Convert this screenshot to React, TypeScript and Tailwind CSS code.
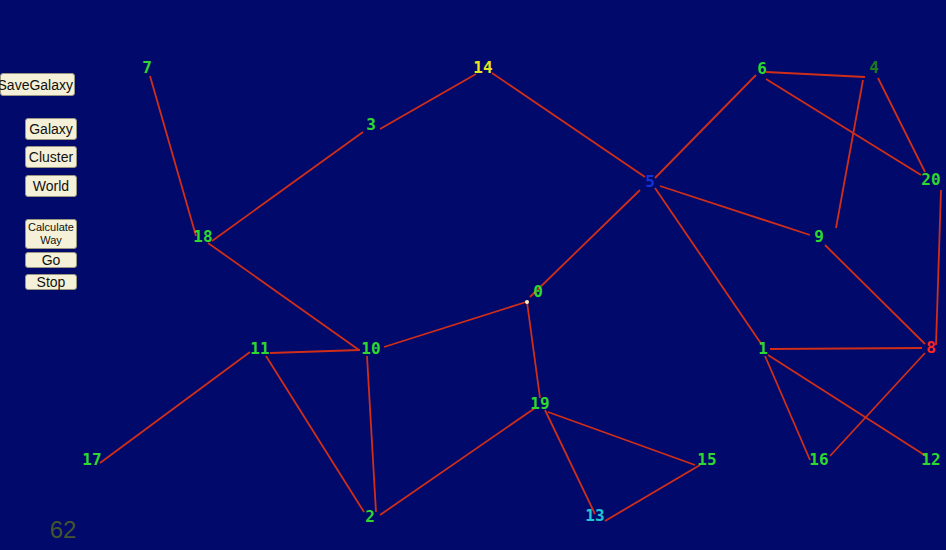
import React from "react";

type N = { id: string; x: number; y: number; c: string };

const nodes: N[] = [
  { id: "7", x: 147, y: 67, c: "#2ed82e" },
  { id: "14", x: 483, y: 67, c: "#e6e61e" },
  { id: "3", x: 371, y: 124, c: "#2ed82e" },
  { id: "18", x: 203, y: 236, c: "#2ed82e" },
  { id: "5", x: 650, y: 181, c: "#1532d8" },
  { id: "6", x: 762, y: 68, c: "#2ed82e" },
  { id: "4", x: 874, y: 67, c: "#1f7a1f" },
  { id: "20", x: 931, y: 179, c: "#2ed82e" },
  { id: "9", x: 819, y: 236, c: "#2ed82e" },
  { id: "0", x: 538, y: 291, c: "#2ed82e" },
  { id: "10", x: 371, y: 348, c: "#2ed82e" },
  { id: "11", x: 260, y: 348, c: "#2ed82e" },
  { id: "17", x: 92, y: 459, c: "#2ed82e" },
  { id: "2", x: 370, y: 516, c: "#2ed82e" },
  { id: "19", x: 540, y: 403, c: "#2ed82e" },
  { id: "15", x: 707, y: 459, c: "#2ed82e" },
  { id: "13", x: 595, y: 515, c: "#22c4d4" },
  { id: "1", x: 763, y: 348, c: "#2ed82e" },
  { id: "8", x: 931, y: 347, c: "#ff2424" },
  { id: "16", x: 819, y: 459, c: "#2ed82e" },
  { id: "12", x: 931, y: 459, c: "#2ed82e" },
];

const lines: [number, number, number, number][] = [
  [150, 76, 196, 236],
  [476, 74, 380, 129],
  [363, 132, 212, 241],
  [492, 73, 645, 177],
  [208, 243, 359, 350],
  [655, 178, 756, 75],
  [766, 72, 865, 77],
  [766, 79, 921, 175],
  [863, 80, 836, 228],
  [878, 78, 925, 172],
  [941, 190, 936, 345],
  [660, 186, 810, 235],
  [825, 245, 925, 344],
  [655, 188, 762, 345],
  [640, 190, 530, 297],
  [526, 302, 384, 347],
  [527, 302, 540, 398],
  [770, 349, 922, 348],
  [765, 356, 810, 460],
  [768, 355, 926, 456],
  [925, 353, 830, 456],
  [270, 353, 360, 350],
  [250, 352, 100, 463],
  [266, 356, 364, 512],
  [367, 356, 376, 512],
  [535, 408, 380, 515],
  [545, 410, 595, 514],
  [548, 412, 695, 465],
  [605, 521, 700, 465],
];

function Btn({ children, className }: { children: React.ReactNode; className: string }) {
  return (
    <div
      className={
        "flex items-center justify-center whitespace-nowrap rounded-[3px] border border-[#9a9680] bg-[#f4f1d8] text-[#111] text-center " +
        className
      }
      style={{ fontFamily: '"Liberation Sans", Arial, sans-serif' }}
    >
      {children}
    </div>
  );
}

export default function App() {
  return (
    <div className="relative h-[550px] w-[946px] overflow-hidden bg-[#010a6a]">
      <svg className="absolute inset-0" width={946} height={550} viewBox="0 0 946 550">
        {lines.map((l, i) => (
          <line key={i} x1={l[0]} y1={l[1]} x2={l[2]} y2={l[3]} stroke="#d02e18" strokeWidth={1.8} />
        ))}
        <circle cx={527} cy={302} r={2} fill="#fff4c0" />
        {nodes.map((n) => (
          <text
            key={n.id}
            x={n.x}
            y={n.y + 6}
            textAnchor="middle"
            fill={n.c}
            fontSize={16}
            fontWeight={700}
            fontFamily='"DejaVu Sans Mono", monospace'
          >
            {n.id}
          </text>
        ))}
        <text x={63} y={538} textAnchor="middle" fill="#45552e" fontSize={24} fontFamily='"Liberation Sans", Arial, sans-serif'>
          62
        </text>
      </svg>
      <div className="relative flex flex-col pt-[73px]">
        <Btn className="h-[23px] w-[75px] justify-end pr-[1px] text-[14px] leading-none">SaveGalaxy</Btn>
        <div className="ml-[25px] mt-[22px] flex w-[52px] flex-col">
          <Btn className="h-[22px] text-[14px] leading-none">Galaxy</Btn>
          <Btn className="mt-[6px] h-[22px] text-[14px] leading-none">Cluster</Btn>
          <Btn className="mt-[7px] h-[22px] text-[14px] leading-none">World</Btn>
          <Btn className="mt-[22px] h-[30px] flex-col text-[11px] leading-[13px]">
            <span>Calculate</span>
            <span>Way</span>
          </Btn>
          <Btn className="mt-[3px] h-[16px] text-[14px] leading-none">Go</Btn>
          <Btn className="mt-[6px] h-[16px] text-[14px] leading-none">Stop</Btn>
        </div>
      </div>
    </div>
  );
}
